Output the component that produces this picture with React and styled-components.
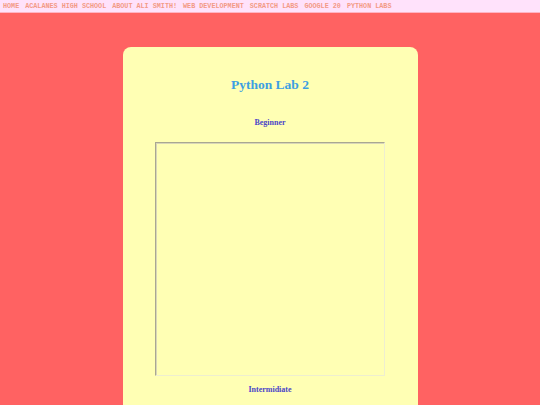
import React from 'react';
import styled, { createGlobalStyle } from 'styled-components';

const GlobalStyle = createGlobalStyle`
  html, body {
    margin: 0;
    padding: 0;
    background: #ff6262;
  }
  body {
    font-family: "Liberation Serif", "Times New Roman", serif;
  }
`;

const links = [
  'HOME',
  'ACALANES HIGH SCHOOL',
  'ABOUT ALI SMITH!',
  'WEB DEVELOPMENT',
  'SCRATCH LABS',
  'GOOGLE 20',
  'PYTHON LABS',
];

const levels = ['Beginner', 'Intermidiate'];

const StyledPage = styled.div`
  height: 405px;
  overflow: hidden;
`;

const StyledNav = styled.nav`
  display: flex;
  align-items: center;
  gap: 6px;
  height: 12px;
  padding: 0 3px;
  background: #ffe2fb;
  border-bottom: 1px solid #ffb4c4;
`;

const StyledNavLink = styled.a`
  font-family: "Liberation Mono", "Courier New", monospace;
  font-size: 6.75px;
  font-weight: bold;
  color: #f39a86;
  text-decoration: none;
  white-space: nowrap;
`;

const StyledCard = styled.main`
  width: 295px;
  margin: 34px auto 0;
  padding: 30px 0 40px;
  background: #ffffb4;
  border-radius: 8px;
  display: flex;
  flex-direction: column;
  align-items: center;
`;

const StyledTitle = styled.h1`
  margin: 0 0 25px;
  font-size: 13.5px;
  line-height: 16px;
  font-weight: bold;
  color: #3d9fe2;
`;

const StyledSection = styled.section`
  display: flex;
  flex-direction: column;
  align-items: center;
`;

const StyledLevel = styled.h3`
  margin: 0 0 14px;
  font-size: 8px;
  line-height: 10px;
  font-weight: bold;
  color: #4b46c8;
`;

const StyledFrame = styled.div`
  box-sizing: border-box;
  width: 230px;
  height: 234px;
  margin-bottom: 9px;
  border: 1px solid;
  border-color: #a9a791 #eeeed0 #eeeed0 #a9a791;
  box-shadow: inset 1px 1px 0 #d8d6b8;
`;

const App = () => {
  return (
    <>
      <GlobalStyle />
      <StyledPage>
        <StyledNav>
          {links.map((link) => (
            <StyledNavLink key={link} href="#">{link}</StyledNavLink>
          ))}
        </StyledNav>
        <StyledCard>
          <StyledTitle>Python Lab 2</StyledTitle>
          {levels.map((level) => (
            <StyledSection key={level}>
              <StyledLevel>{level}</StyledLevel>
              <StyledFrame />
            </StyledSection>
          ))}
        </StyledCard>
      </StyledPage>
    </>
  );
};

export default App;
